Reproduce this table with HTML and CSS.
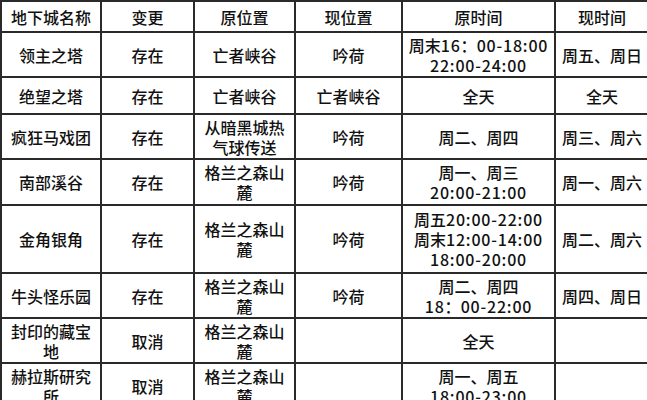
FILE: index.html
```html
<!DOCTYPE html>
<html lang="zh-CN">
<head>
<meta charset="utf-8">
<title>地下城变更表</title>
<link rel="stylesheet" href="styles.css">
</head>
<body>
<table class="grid">
  <thead>
    <tr class="r-head">
      <th class="c1">地下城名称</th>
      <th class="c2">变更</th>
      <th class="c3">原位置</th>
      <th class="c4">现位置</th>
      <th class="c5">原时间</th>
      <th class="c6">现时间</th>
    </tr>
  </thead>
  <tbody>
    <tr class="r45">
      <td>领主之塔</td><td>存在</td><td>亡者峡谷</td><td>吟荷</td>
      <td>周末<span class="num">16</span>：<span class="num">00-18:00</span><br><span class="num">22:00-24:00</span></td><td>周五、周日</td>
    </tr>
    <tr class="r37">
      <td>绝望之塔</td><td>存在</td><td>亡者峡谷</td><td>亡者峡谷</td>
      <td>全天</td><td>全天</td>
    </tr>
    <tr class="r45">
      <td>疯狂马戏团</td><td>存在</td><td>从暗黑城热气球传送</td><td>吟荷</td>
      <td>周二、周四</td><td>周三、周六</td>
    </tr>
    <tr class="r46">
      <td>南部溪谷</td><td>存在</td><td>格兰之森山麓</td><td>吟荷</td>
      <td>周一、周三<br><span class="num">20:00-21:00</span></td><td>周一、周六</td>
    </tr>
    <tr class="r68">
      <td>金角银角</td><td>存在</td><td>格兰之森山麓</td><td>吟荷</td>
      <td>周五<span class="num">20:00-22:00</span><br>周末<span class="num">12:00-14:00</span><br><span class="num">18:00-20:00</span></td><td>周二、周六</td>
    </tr>
    <tr class="r45">
      <td>牛头怪乐园</td><td>存在</td><td>格兰之森山麓</td><td>吟荷</td>
      <td>周二、周四<br><span class="num">18</span>：<span class="num">00-22:00</span></td><td>周四、周日</td>
    </tr>
    <tr class="r45">
      <td>封印的藏宝地</td><td>取消</td><td>格兰之森山麓</td><td></td>
      <td>全天</td><td></td>
    </tr>
    <tr class="r45">
      <td>赫拉斯研究所</td><td>取消</td><td>格兰之森山麓</td><td></td>
      <td>周一、周五<br><span class="num">18:00-23:00</span></td><td></td>
    </tr>
  </tbody>
</table>
</body>
</html>
```
FILE: styles.css
```css
html, body {
  margin: 0;
  padding: 0;
  background: #ffffff;
  overflow: hidden;
}
.grid {
  border-collapse: separate;
  border-spacing: 0;
  table-layout: fixed;
  width: 650px;
  border-top: 2px solid #2a2a2a;
  border-left: 2px solid #2a2a2a;
  font-family: "Noto Sans CJK SC", "Noto Sans", sans-serif;
  font-size: 16px;
  font-weight: 500;
  line-height: 20px;
  color: #111111;
}
.grid th,
.grid td {
  box-sizing: border-box;
  border-right: 2px solid #2a2a2a;
  border-bottom: 2px solid #2a2a2a;
  padding: 0 5px;
  text-align: center;
  vertical-align: middle;
  font-weight: 500;
}
.num {
  letter-spacing: 0.8px;
}
.c1 { width: 100px; }
.c2 { width: 93px; }
.c3 { width: 101px; }
.c4 { width: 107px; }
.c5 { width: 153px; padding: 0 2px; }
.c6 { width: 94px; }
.grid td:nth-child(5) { padding: 0 2px; }
.r-head th { height: 31px; }
.r45 td { height: 45px; }
.r37 td { height: 37px; }
.r46 td { height: 46px; }
.r68 td { height: 68px; }
```
